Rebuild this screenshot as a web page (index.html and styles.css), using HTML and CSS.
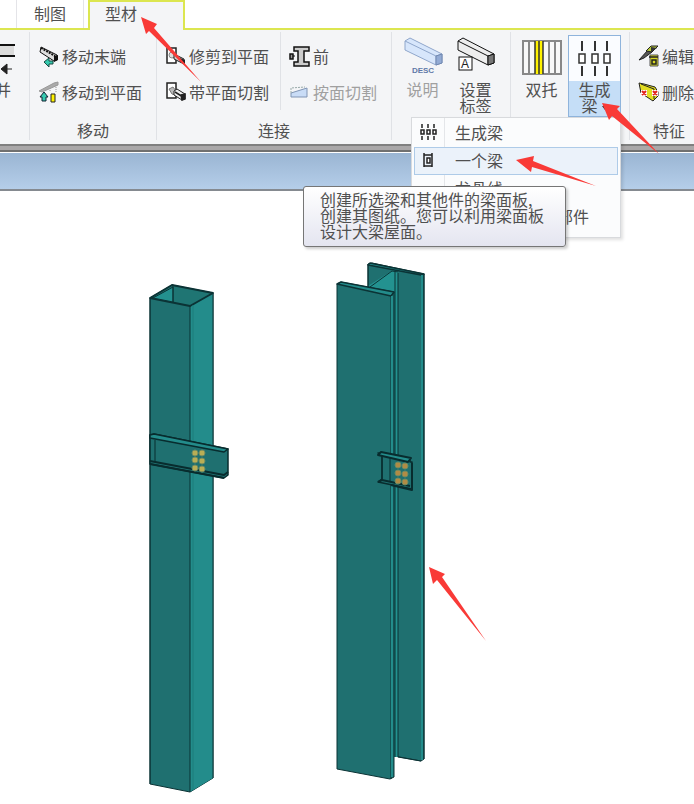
FILE: index.html
```html
<!DOCTYPE html>
<html lang="zh-CN">
<head>
  <meta charset="UTF-8">
  <title>型材</title>
  <link rel="stylesheet" href="styles.css">
</head>

<body>
  <nav class="tabs">
    <button class="tab">制图</button>
    <button class="tab active">型材</button>
  </nav>

  <div class="ribbon">
    <section class="group group-cut">
      <button class="big">
        <svg width="36" height="44" viewBox="0 0 36 44">
          <rect x="-2" y="8" width="37" height="11" fill="#dcdcdc"/>
          <path d="M0 8H36M0 19H36" stroke="#111" stroke-width="2"/>
          <path d="M22 32l6-5v10zM28 32h5" fill="#222" stroke="#222"/>
        </svg>
        <span>合并</span>
      </button>
    </section>

    <section class="group">
      <div class="tools">
        <div class="column">
          <button class="row">
            <svg width="22" height="22" viewBox="0 0 22 22">
              <path d="M3 2l16 8v5l-3 1L2 7z" fill="#ddd" stroke="#111"/>
              <path d="M3 3l14 8" stroke="#111" stroke-width="2" stroke-dasharray="2 1"/>
              <path d="M16 11l4-1v5l-4 2z" fill="#111"/>
              <path d="M6 17l5-4v3h4v3h-4v3z" fill="#35c9ae" stroke="#174a42"/>
            </svg>
            <span>移动末端</span>
          </button>
          <button class="row">
            <svg width="22" height="22" viewBox="0 0 22 22">
              <path d="M1 10L16 2l4-1v3L4 11z" fill="#aaa" stroke="#999"/>
              <path d="M12 7v4M18 4v8" stroke="#999" stroke-dasharray="1 1"/>
              <path d="M2 16l4-5 4 5H8v4H4v-4z" fill="#35c9ae" stroke="#123"/>
              <path d="M13 21v-8h4v8z" fill="#fff200" stroke="#222"/>
            </svg>
            <span>移动到平面</span>
          </button>
        </div>
      </div>
      <h2>移动</h2>
    </section>

    <section class="group">
      <div class="tools">
        <div class="column divided">
          <button class="row">
            <svg width="22" height="22" viewBox="0 0 22 22">
              <path d="M2 3h9v15H2z" fill="#fff" stroke="#222" stroke-width="1.5"/>
              <circle cx="7" cy="10" r="3" fill="#ddd" stroke="#888"/>
              <path d="M9 9l10 5v5l-10-5z" fill="#ccc" stroke="#222"/>
              <path d="M15 13l5 2v4l-5-2z" fill="#222"/>
            </svg>
            <span>修剪到平面</span>
          </button>
          <button class="row">
            <svg width="22" height="22" viewBox="0 0 22 22">
              <path d="M2 2h9v15H2z" fill="#fff" stroke="#222" stroke-width="1.5"/>
              <path d="M4 8l4-2 3 4v4l-4-1z" fill="#bbb" stroke="#777"/>
              <path d="M9 10l3-2 8 5v5l-3 1-8-5z" fill="#eee" stroke="#222"/>
              <path d="M10 11l8 5M16 14l4-1v5l-3 1z" fill="#222" stroke="#222" stroke-width="1.5"/>
            </svg>
            <span>带平面切割</span>
          </button>
        </div>
        <div class="column">
          <button class="row">
            <svg width="22" height="22" viewBox="0 0 22 22">
              <path d="M5 2h15v4h-5v11h5v4H5v-4h4V6H5z" fill="#ccc" stroke="#111" stroke-width="1.5"/>
              <path d="M1 9h3v5H1z" fill="#999" stroke="#111" stroke-width="1.5"/>
              <path d="M4 11h2" stroke="#111"/>
            </svg>
            <span>前</span>
          </button>
          <button class="row" disabled>
            <svg width="22" height="22" viewBox="0 0 22 22">
              <path d="M2 12l16-5v9H2z" fill="#c9dcf6" stroke="#8095b4"/>
              <path d="M2 12V7l14-1" fill="none" stroke="#9aa" stroke-dasharray="2 1"/>
            </svg>
            <span>按面切割</span>
          </button>
        </div>
      </div>
      <h2>连接</h2>
    </section>

    <section class="group">
      <div class="tools">
        <button class="big" disabled>
          <svg width="40" height="44" viewBox="0 0 40 44">
            <path d="M2 4l5-3 32 16v9l-6 2L2 13z" fill="#d7e6fb" stroke="#8fa6cb"/>
            <path d="M2 4l31 15v9M33 19l6-2" fill="none" stroke="#8fa6cb"/>
            <path d="M33 19l6-2v9l-6 2z" fill="#93abd4" stroke="#7188b0"/>
            <text x="20" y="36" class="desc">DESC</text>
          </svg>
          <span>说明</span>
        </button>
        <button class="big">
          <svg width="40" height="44" viewBox="0 0 40 44">
            <path d="M2 4l5-3 31 16v9l-6 2L2 13z" fill="#eee" stroke="#111"/>
            <path d="M2 4l30 15v9M32 19l6-2" fill="none" stroke="#111"/>
            <path d="M32 19l6-2v9l-6 2z" fill="#777" stroke="#111"/>
            <rect x="3" y="20" width="13" height="13" fill="#fff" stroke="#111"/>
            <text x="9" y="31" class="tag">A</text>
          </svg>
          <span>设置<br>标签</span>
        </button>
      </div>
    </section>

    <section class="group">
      <div class="tools">
        <button class="big">
          <svg width="40" height="44" viewBox="0 0 40 44">
            <rect x="1" y="4" width="38" height="33" fill="#f8f8f8" stroke="#888" stroke-width="2"/>
            <path d="M7 4v33M27 4v33M33 4v33" stroke="#888" stroke-width="2"/>
            <path d="M13 4h8v33h-8z" fill="#fff200"/>
            <path d="M13 4v33M17 4v33M21 4v33" stroke="#333" stroke-width="1.5"/>
          </svg>
          <span>双托</span>
        </button>
        <div class="dropdown">
          <button class="big pressed">
            <svg width="40" height="44" viewBox="0 0 40 44">
              <path d="M7 4v10M20 4v10M32 4v10M7 29v10M20 29v10M32 29v10" stroke="#333" stroke-width="2"/>
              <path d="M4 17h6v9H4zM17 17h6v9h-6zM29 17h6v9h-6z" fill="#fff" stroke="#333" stroke-width="1.5"/>
            </svg>
            <span>生成<br>梁<i class="caret"></i></span>
          </button>

          <div class="menu">
            <button class="item">
              <svg width="18" height="18" viewBox="0 0 18 18">
                <path d="M3 1v4M9 1v4M15 1v4M3 13v4M9 13v4M15 13v4" stroke="#222" stroke-width="1.5"/>
                <path d="M2 7h3v4H2zM8 7h3v4H8zM14 7h3v4h-3z" fill="#fff" stroke="#222" stroke-width="1.5"/>
              </svg>
              <span>生成梁</span>
            </button>
            <button class="item hover">
              <svg width="18" height="18" viewBox="0 0 18 18">
                <path d="M5 2v14M13 2v14M5 4h8M5 15h8" fill="none" stroke="#222" stroke-width="1.5"/>
                <rect x="8" y="7" width="3" height="5" fill="#fff" stroke="#222" stroke-width="1.5"/>
              </svg>
              <span>一个梁</span>
            </button>
            <button class="item">
              <svg width="18" height="18"></svg>
              <span>龙骨线</span>
            </button>
            <button class="item item-end">
              <span>部件</span>
            </button>
          </div>

          <div class="tooltip" role="tooltip">创建所选梁和其他件的梁面板,<br>创建其图纸。您可以利用梁面板<br>设计大梁屋面。</div>
        </div>
      </div>
    </section>

    <section class="group">
      <div class="tools">
        <div class="column">
          <button class="row">
            <svg width="22" height="22" viewBox="0 0 22 22">
              <path d="M1 15L10 5l4 2-8 6z" fill="#555" stroke="#222"/>
              <path d="M8 6l5-5h7l-6 6z" fill="#b8c93a" stroke="#222"/>
              <path d="M13 2l6 1-6 4z" fill="#333"/>
              <path d="M12 10h8v11h-8z" fill="#d8d820" stroke="#555"/>
              <path d="M11 12h9M14 15h4v4h-4z" fill="none" stroke="#222" stroke-width="1.5"/>
            </svg>
            <span>编辑</span>
          </button>
          <button class="row">
            <svg width="22" height="22" viewBox="0 0 22 22">
              <path d="M1 2l5 1 11 3 3 5v4l-5 5L3 12z" fill="#e2dc20" stroke="#222"/>
              <path d="M3 3l13 5v10" fill="none" stroke="#222"/>
              <path d="M3 9h6v6H3zM14 9h6v6h-6z" fill="#fff"/>
              <path d="M4 10l4 4M8 10l-4 4M15 10l4 4M19 10l-4 4" stroke="#e3201b" stroke-width="2"/>
            </svg>
            <span>删除</span>
          </button>
        </div>
      </div>
      <h2>特征</h2>
    </section>
  </div>

  <div class="splitter"></div>
  <div class="titlebar"></div>

  <main class="canvas">
    <svg width="694" height="613" viewBox="0 191 694 613">
      <!-- hollow column -->
      <g stroke="#0b3335" stroke-linejoin="round">
        <path d="M150 298L172 285L213 293V778L190 792L150 784Z" fill="#1f7070"/>
        <path d="M190 307L213 293V778L190 792Z" fill="#238c8b" stroke="none"/>
        <path d="M150 298L172 285L213 293L190 306Z" fill="#1f7573" stroke-width="2"/>
        <path d="M153 298L173 287V302Z" fill="#23918f"/>
        <path d="M173 286V302M150 299V784M190 306V792M213 294V778" fill="none"/>
        <path d="M193 305V790" stroke="#1c7d7b"/>
      </g>
      <!-- plate on the column -->
      <g stroke="#082c2e" stroke-linejoin="round">
        <path d="M150 435L154 434L228 449V475L224 478L150 464Z" fill="#1f7070" stroke-width="1.5"/>
        <path d="M150 435L154 434L228 449L224 452L150 438Z" fill="#238c8b" stroke-width="1.5"/>
        <path d="M150 461L224 475L228 472M150 464L224 478" fill="none" stroke-width="2"/>
        <path d="M155 440V462" fill="none"/>
      </g>
      <!-- H beam -->
      <g stroke="#0b3335" stroke-linejoin="round">
        <path d="M368 264L372 263L424 274V759L421 761L394 756V300L368 288Z" fill="#1f7070"/>
        <path d="M368 286L393 270L398 272V757H390V296Z" fill="#239290" stroke="none"/>
        <path d="M368 265L370 263L424 274L421 275Z" fill="#238c8b" stroke-width="1.5"/>
        <path d="M368 264V287M370 287L392 271L398 272M395 272V757M398 273V757L421 761" fill="none"/>
        <path d="M422 275V760" stroke="#238c8b" stroke-width="2"/>
        <path d="M424 274V759" fill="none"/>
        <path d="M337 284L341 282L394 292V777L390 779L337 769Z" fill="#1f7070"/>
        <path d="M337 284L341 282L394 292L391 296Z" fill="#238c8b" stroke-width="1.5"/>
        <path d="M391 296V779" fill="none"/>
        <path d="M392 296V777" stroke="#238c8b" stroke-width="2"/>
      </g>
      <!-- plate on the beam -->
      <g stroke="#082c2e" stroke-width="2" stroke-linejoin="round">
        <path d="M378 453L410 459V462H412V489L378 482L382 479V456Z" fill="#1f7070" stroke-width="1.5"/>
        <path d="M378 455L381 452L411 458L408 462Z" fill="#238c8b"/>
        <path d="M378 482L382 480L410 486M412 463V490L391 485" fill="none"/>
        <path d="M382 457V480M390 458V482" fill="none" stroke-width="1"/>
      </g>
      <g class="bolts">
        <circle cx="195" cy="453" r="3"/><circle cx="202" cy="453" r="3"/>
        <circle cx="195" cy="460" r="3"/><circle cx="202" cy="461" r="3"/>
        <circle cx="195" cy="468" r="3"/><circle cx="202" cy="469" r="3"/>
      </g>
      <g class="bolts dark">
        <circle cx="398" cy="465" r="3"/><circle cx="405" cy="466" r="3"/>
        <circle cx="398" cy="473" r="3"/><circle cx="405" cy="474" r="3"/>
        <circle cx="398" cy="481" r="3"/><circle cx="405" cy="482" r="3"/>
      </g>
    </svg>
  </main>

  <svg class="arrows" width="694" height="804" viewBox="0 0 694 804">
    <path d="M141 17L157 24L154 28L201 82L149 31L146 34Z"/>
    <path d="M602 103L620 106L617 109L659 154L612 116L609 120Z"/>
    <path d="M516 160L534 156L533 161L596 186L532 167L531 172Z"/>
    <path d="M429 567L445 574L442 577L486 641L437 580L433 584Z"/>
  </svg>
</body>
</html>
```

FILE: styles.css
```css
* {
  box-sizing: border-box;
}

body {
  position: relative;
  margin: 0;
  background-color: #fff;
  color: #505050;
  font-family: "Noto Sans CJK SC", sans-serif;
  font-size: 16px;
  line-height: 16px;
  overflow: hidden;
}

button {
  margin: 0;
  padding: 0;
  border: none;
  background: none;
  color: inherit;
  font: inherit;
}

button:disabled {
  color: #a0a0a0;
}

svg {
  display: block;
  flex: none;
}

/* tabs */
.tabs {
  display: flex;
  gap: 4px;
  height: 30px;
  padding-left: 16px;
  border-bottom: 2px solid #dce650;
}

.tab {
  height: 28px;
  padding: 0 17px 2px;
  border-left: 1px solid #e4e4e8;
  border-right: 1px solid #e4e4e8;
}

.tab.active {
  height: 30px;
  padding: 0 46px 6px 15px;
  border: 2px solid #dce650;
  border-bottom: none;
  background-color: #f4f5f7;
}

/* ribbon */
.ribbon {
  display: flex;
  height: 114px;
  padding: 2px 0 4px;
  background-color: #f4f5f7;
}

.group {
  display: flex;
  flex: none;
  flex-direction: column;
  justify-content: space-between;
  border-right: 1px solid #e0e2e6;
}

.group h2 {
  margin: 0;
  padding-bottom: 1px;
  font-size: 16px;
  font-weight: normal;
  line-height: 18px;
  text-align: center;
}

.group-cut {
  align-items: flex-end;
  width: 30px;
  padding-right: 14px;
  overflow: hidden;
}

.group-cut .big {
  align-items: flex-start;
  width: 36px;
}

.tools {
  display: flex;
}

.column {
  padding: 6px 14px 0 8px;
}

.column.divided {
  padding-right: 11px;
  border-right: 1px solid #e0e2e6;
}

.row {
  display: flex;
  align-items: center;
  gap: 2px;
  height: 36px;
  white-space: nowrap;
}

.big {
  display: flex;
  flex-direction: column;
  align-items: center;
  width: 53px;
  height: 82px;
  margin-top: 3px;
  padding-top: 2px;
}

.tools > .big:first-child {
  margin-left: 4px;
}

.tools > .big:last-child {
  margin-right: 8px;
}

.desc,
.tag {
  font-family: "Liberation Sans", sans-serif;
  text-anchor: middle;
}

.desc {
  fill: #6078a8;
  font-size: 8px;
  font-weight: bold;
}

.tag {
  fill: #222;
  font-size: 12px;
}

.pressed {
  padding-top: 1px;
  border: 1px solid #8fb4dc;
  background: linear-gradient(#fafcff 0, #fafcff 45px, #c5def7 45px);
}

.caret {
  display: inline-block;
  margin-left: 4px;
  border: 3px solid transparent;
  border-top: 4px solid #333;
  border-bottom: none;
  vertical-align: middle;
}

/* dropdown */
.dropdown {
  position: relative;
  margin-right: 8px;
}

.menu {
  position: absolute;
  top: 85px;
  right: 0;
  z-index: 1;
  width: 210px;
  padding: 1px 2px 6px;
  border: 1px solid #d8dadd;
  background: linear-gradient(90deg, transparent 32px, #e4e6e9 32px, #e4e6e9 33px, transparent 33px) #fbfcfd;
  box-shadow: 2px 2px 3px rgba(0, 0, 0, 0.12);
}

.item {
  display: flex;
  align-items: center;
  gap: 18px;
  width: 100%;
  height: 28px;
  padding: 0 0 2px 4px;
  border: 1px solid transparent;
}

.item.hover {
  border-color: #aecbe8;
  background-color: #ebf2fa;
}

.item-end {
  justify-content: flex-end;
  padding-right: 28px;
}

.tooltip {
  position: absolute;
  top: 154px;
  right: 55px;
  z-index: 2;
  width: 263px;
  padding: 4px 16px 7px;
  border: 1px solid #767676;
  border-radius: 3px;
  background: linear-gradient(#fff, #e4e5f0);
  box-shadow: 2px 2px 3px rgba(0, 0, 0, 0.2);
  white-space: nowrap;
}

/* drawing window */
.splitter {
  height: 8px;
  border-top: 2px solid #808080;
  border-bottom: 2px solid #707070;
  background-color: #aaa8a9;
}

.titlebar {
  height: 39px;
  border-top: 1px solid #fff;
  border-bottom: 2px solid #858a90;
  background: linear-gradient(#9ab5d3, #b5cee9);
}

.canvas {
  overflow: hidden;
}

.bolts {
  fill: #b9ae55;
  stroke: #6d8a62;
}

.bolts.dark {
  fill: #b08b45;
}

.arrows {
  position: absolute;
  top: 0;
  left: 0;
  z-index: 3;
  fill: #f93a37;
  pointer-events: none;
}
```
